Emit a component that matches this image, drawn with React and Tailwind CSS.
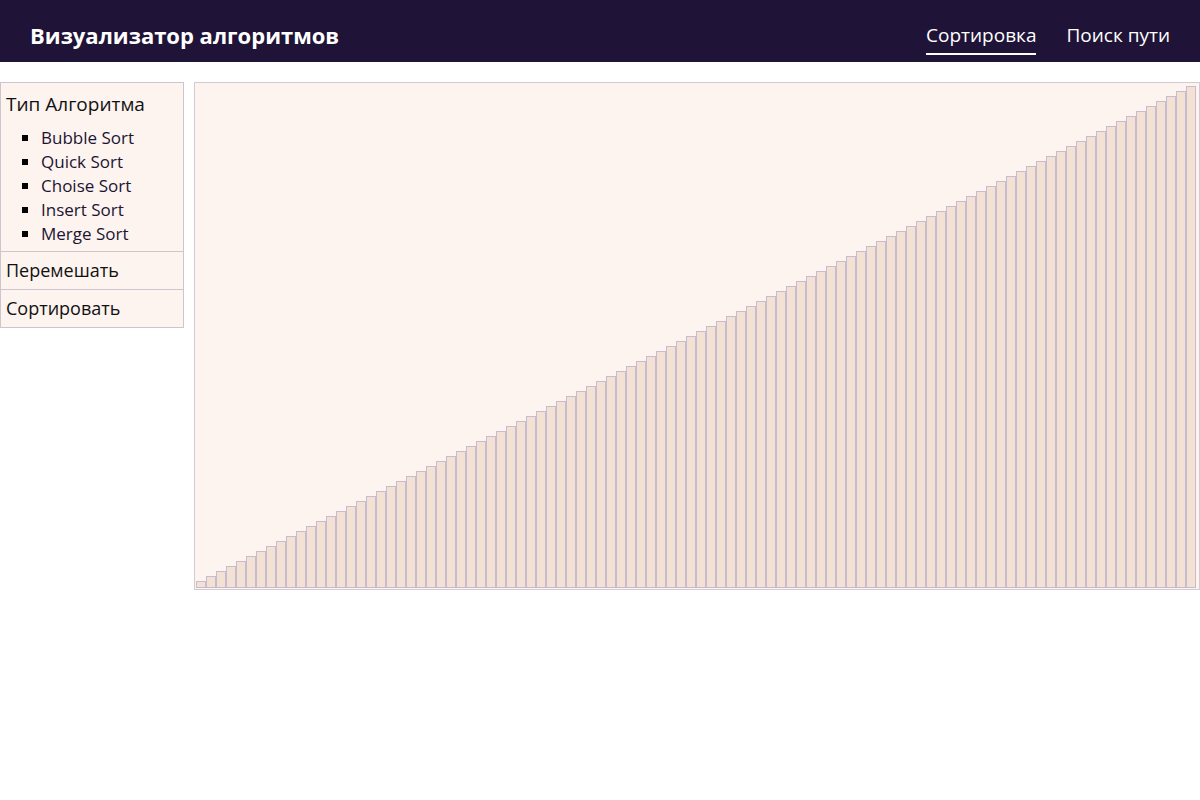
const algorithms = ['Bubble Sort', 'Quick Sort', 'Choise Sort', 'Insert Sort', 'Merge Sort']

const bars = Array.from({ length: 100 }, (_, i) => 5 * i + 7)

function Header() {
  return (
    <header className="flex h-[62px] items-center justify-between bg-[#1f1337] pl-[30px] pr-[30px] pt-[8px] text-white">
      <h1 className="text-[22px] font-bold">Визуализатор алгоритмов</h1>
      <nav className="flex items-center gap-[30px] text-[19px]">
        <a className="relative" href="#">
          Сортировка
          <span className="absolute left-0 right-0 top-[32px] h-[2px] bg-white" />
        </a>
        <a href="#">Поиск пути</a>
      </nav>
    </header>
  )
}

function Sidebar() {
  return (
    <aside className="w-[184px] shrink-0 self-start border border-[#cfc5cf] bg-[#fdf3ef] text-[#111]">
      <div className="px-[5px] pb-[5px] pt-[8px]">
        <div className="text-[19px] leading-[26px]">Тип Алгоритма</div>
        <ul className="mt-[9px] list-[square] pl-[35px] text-[17px] leading-[24px] text-[#1b1533] marker:text-black">
          {algorithms.map((name) => (
            <li key={name}>{name}</li>
          ))}
        </ul>
      </div>
      <button className="block w-full border-t border-[#cfc5cf] px-[5px] text-left text-[18px] leading-[37px]" type="button">
        Перемешать
      </button>
      <button className="block w-full border-t border-[#cfc5cf] px-[5px] text-left text-[18px] leading-[37px]" type="button">
        Сортировать
      </button>
    </aside>
  )
}

export default function App() {
  return (
    <div className="min-h-[800px] bg-white font-['Open_Sans',sans-serif]">
      <Header />
      <main className="mt-[20px] flex gap-[10px]">
        <Sidebar />
        <div className="flex h-[508px] w-[1006px] items-end border border-[#d3cad6] bg-[#fdf3ef] px-[1px] pb-[1px]">
          {bars.map((h, i) => (
            <div
              className="w-[10px] shrink-0 border border-[#c7bbcf] bg-[#f3e2d4]"
              key={i}
              style={{ height: h }}
            />
          ))}
        </div>
      </main>
    </div>
  )
}
